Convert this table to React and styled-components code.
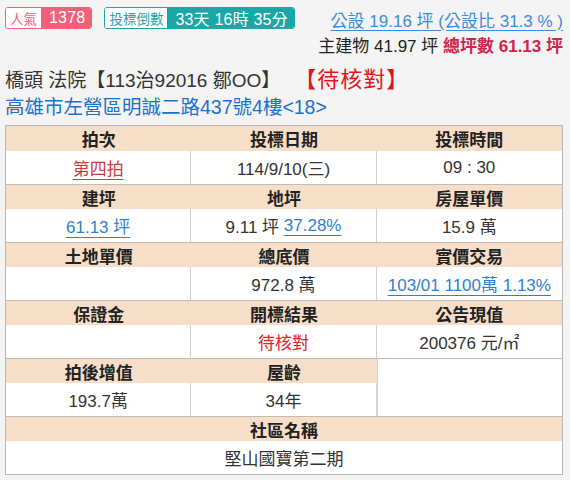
import React from "react";
import styled, { createGlobalStyle } from "styled-components";

const Global = createGlobalStyle`
  *, *::before, *::after { box-sizing: border-box; }
  html, body { margin: 0; padding: 0; background: #f4f4f4; }
  body { font-family: "Liberation Sans", "Noto Sans CJK TC", sans-serif; color: #333; }
`;

const Page = styled.div`
  width: 570px;
  padding: 7px 7px 0 5px;
`;

const Top = styled.div`
  display: flex;
  justify-content: space-between;
  align-items: flex-start;
`;

const Badges = styled.div`
  display: flex;
  gap: 12px;
`;

const Badge = styled.div`
  display: flex;
  height: 22px;
  border: 1px solid ${(p) => p.$c};
  border-radius: 3px;
  overflow: hidden;
`;

const BadgeLabel = styled.span`
  display: flex;
  align-items: center;
  padding: 0 4px;
  background: #fff;
  color: ${(p) => p.$c};
  font-size: 13.5px;
`;

const BadgeValue = styled.span`
  display: flex;
  align-items: center;
  padding: 0 6px 0 8px;
  background: ${(p) => p.$c};
  color: #fff;
  font-size: 16px;
  letter-spacing: 0.2px;
`;

const Summary = styled.div`
  display: flex;
  flex-direction: column;
  align-items: flex-end;
  font-size: 17px;
`;

const ShareLine = styled.a`
  color: #3f8bd8;
  line-height: 24px;
  margin-top: 3px;
  text-decoration: underline;
  text-underline-offset: 3px;
`;

const AreaLine = styled.div`
  line-height: 26px;
  color: #222;
`;

const Strong = styled.b`
  color: #d3224b;
`;

const Title = styled.div`
  margin-top: 7px;
  font-size: 19px;
  line-height: 26px;
  color: #333;
  white-space: nowrap;
`;

const Status = styled.span`
  color: #e0141e;
  font-size: 22px;
  letter-spacing: 1px;
  margin-left: 25px;
`;

const Address = styled.div`
  font-size: 19.5px;
  line-height: 26px;
  color: #1b72cc;
`;

const Table = styled.div`
  margin-top: 5px;
  display: grid;
  grid-template-columns: repeat(3, 1fr);
  border: 1px solid #b9b5b0;
  background: #fff;
`;

const Head = styled.div`
  grid-column: span ${(p) => p.$span || 1};
  height: 25px;
  display: flex;
  align-items: center;
  justify-content: center;
  background: #f6dec8;
  border-top: ${(p) => (p.$first ? "none" : "1px solid #c4bcb4")};
  font-weight: bold;
  font-size: 17px;
  color: #222;
`;

const Cell = styled.div`
  grid-column: span ${(p) => p.$span || 1};
  grid-row: span ${(p) => p.$rows || 1};
  height: ${(p) => (p.$rows ? "auto" : "33px")};
  display: flex;
  align-items: center;
  justify-content: center;
  background: #fff;
  border-right: ${(p) => (p.$last ? "none" : "1px solid #d6d0ca")};
  border-left: ${(p) => (p.$tall ? "1px solid #d6d0ca" : "none")};
  border-top: ${(p) => (p.$tall ? "1px solid #c4bcb4" : "none")};
  font-size: 17px;
  color: #333;
`;

const Link = styled.a`
  color: ${(p) => p.$c || "#2f7fcf"};
  text-decoration: underline;
  text-underline-offset: 4px;
`;

const Red = styled.span`
  color: #e32424;
`;

export default function App() {
  return (
    <>
      <Global />
      <Page>
        <Top>
          <Badges>
            <Badge $c="#f2607c">
              <BadgeLabel $c="#f2607c">人氣</BadgeLabel>
              <BadgeValue $c="#f2607c">1378</BadgeValue>
            </Badge>
            <Badge $c="#1ca6a6">
              <BadgeLabel $c="#1ca6a6">投標倒數</BadgeLabel>
              <BadgeValue $c="#1ca6a6">33天 16時 35分</BadgeValue>
            </Badge>
          </Badges>
          <Summary>
            <ShareLine>公設 19.16 坪 (公設比 31.3 % )</ShareLine>
            <AreaLine>
              主建物 41.97 坪 <Strong>總坪數 61.13 坪</Strong>
            </AreaLine>
          </Summary>
        </Top>
        <Title>
          橋頭 法院【113治92016 鄒OO】<Status>【待核對】</Status>
        </Title>
        <Address>高雄市左營區明誠二路437號4樓&lt;18&gt;</Address>
        <Table>
          <Head $first>拍次</Head>
          <Head $first>投標日期</Head>
          <Head $first>投標時間</Head>
          <Cell><Link $c="#d23a3a">第四拍</Link></Cell>
          <Cell>114/9/10(三)</Cell>
          <Cell $last>09 : 30</Cell>

          <Head>建坪</Head>
          <Head>地坪</Head>
          <Head>房屋單價</Head>
          <Cell><Link>61.13 坪</Link></Cell>
          <Cell>9.11 坪&nbsp;<Link>37.28%</Link></Cell>
          <Cell $last>15.9 萬</Cell>

          <Head>土地單價</Head>
          <Head>總底價</Head>
          <Head>實價交易</Head>
          <Cell></Cell>
          <Cell>972.8 萬</Cell>
          <Cell $last><Link>103/01 1100萬 1.13%</Link></Cell>

          <Head>保證金</Head>
          <Head>開標結果</Head>
          <Head>公告現值</Head>
          <Cell></Cell>
          <Cell><Red>待核對</Red></Cell>
          <Cell $last>200376 元/㎡</Cell>

          <Head>拍後增值</Head>
          <Head>屋齡</Head>
          <Cell $rows={2} $last $tall></Cell>
          <Cell>193.7萬</Cell>
          <Cell>34年</Cell>

          <Head $span={3}>社區名稱</Head>
          <Cell $span={3} $last>堅山國寶第二期</Cell>
        </Table>
      </Page>
    </>
  );
}
